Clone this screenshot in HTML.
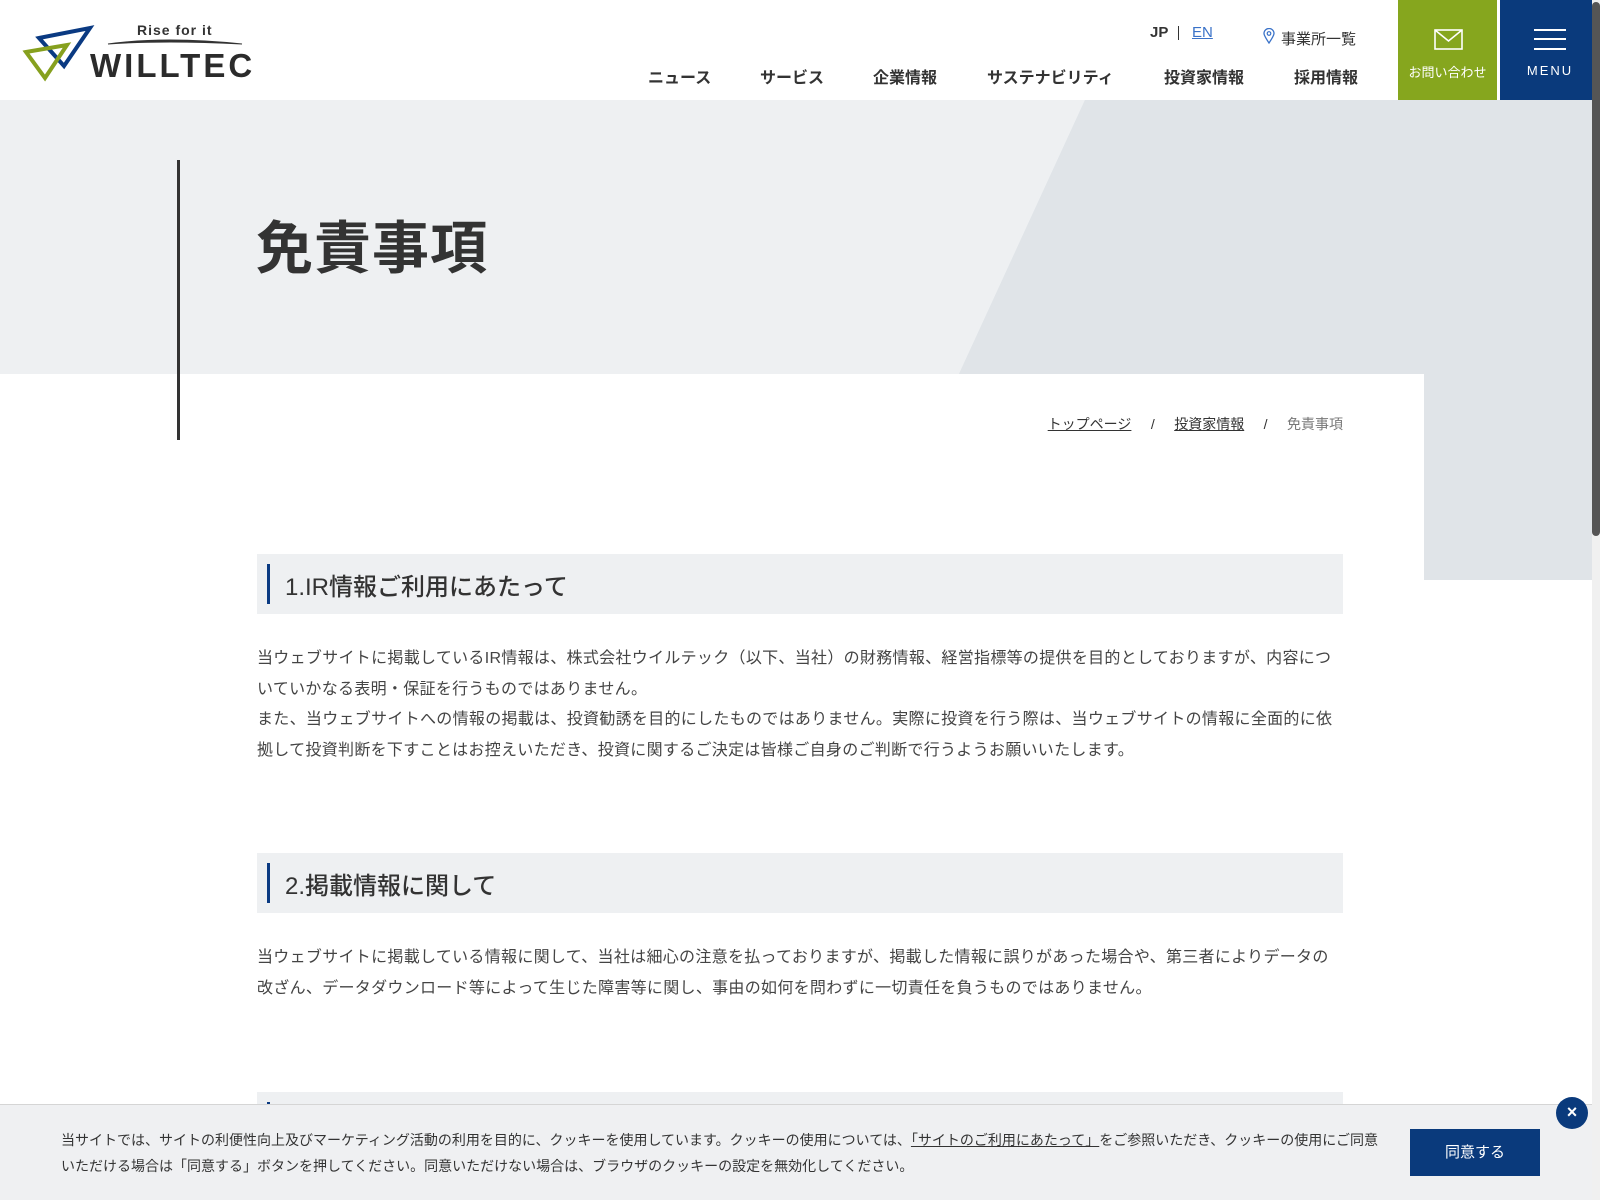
<!DOCTYPE html>
<html><head><meta charset="utf-8"><style>
*{margin:0;padding:0;box-sizing:border-box}
body{width:1600px;height:1200px;overflow:hidden;position:relative;background:#fff;font-family:"Liberation Sans","Noto Sans CJK JP",sans-serif;color:#333}
.abs{position:absolute}
.nav{position:absolute;top:64px;font-size:16px;font-weight:bold;color:#333;white-space:nowrap}
.h{position:absolute;left:257px;width:1086px;height:60px;background:#eef0f2}
.h:before{content:"";position:absolute;left:10px;top:10px;width:3px;height:40px;background:#0a3a82}
.h span{position:absolute;left:28px;top:13px;font-size:24px;font-weight:500;color:#333}
.p{position:absolute;left:257px;width:1100px;font-size:16px;line-height:30.5px;color:#444;letter-spacing:0.3px;white-space:nowrap}
</style></head><body>
<div class="abs" style="left:0;top:100px;width:1600px;height:480px;background:#eef0f2"></div>
<svg class="abs" style="left:0;top:100px" width="1600" height="480"><polygon points="1085,0 1600,0 1600,480 959,480 959,274" fill="#e0e4e8"/><polygon points="1085,0 1600,0 1600,274 959,274" fill="#e0e4e8"/></svg>
<div class="abs" style="left:0;top:374px;width:1424px;height:826px;background:#fff"></div>
<div class="abs" style="left:177px;top:160px;width:3px;height:280px;background:#333"></div>
<div class="abs" style="left:256px;top:203px;font-size:57px;font-weight:bold;color:#333;letter-spacing:1px">免責事項</div>
<div class="abs" style="right:257px;top:414px;font-size:14px;color:#333"><u>トップページ</u>&nbsp;&nbsp;&nbsp;&nbsp;&nbsp;/&nbsp;&nbsp;&nbsp;&nbsp;&nbsp;<u>投資家情報</u>&nbsp;&nbsp;&nbsp;&nbsp;&nbsp;/&nbsp;&nbsp;&nbsp;&nbsp;&nbsp;<span style="color:#777">免責事項</span></div>
<div class="abs" style="left:0;top:0;width:1600px;height:100px;background:#fff"></div>
<svg class="abs" style="left:20px;top:20px" width="250" height="65">
<polygon points="19,18 70,8 44,46" fill="none" stroke="#0a3a82" stroke-width="4" stroke-linejoin="miter"/>
<polygon points="6,32 47,25 25,58" fill="none" stroke="#86a01e" stroke-width="4"/>
<text x="117" y="15" font-size="14" font-weight="bold" fill="#333" font-family="Liberation Sans" letter-spacing="1">Rise for it</text>
<path d="M88,24 Q145,16 222,24 Q145,20 88,24Z" fill="#333" stroke="#333" stroke-width="1"/>
<text x="70" y="57" font-size="33" font-weight="bold" fill="#2b2b2b" font-family="Liberation Sans" letter-spacing="3">WILLTEC</text>
</svg>
<div class="abs" style="left:1150px;top:24px;font-size:15px;font-weight:bold;color:#333">JP</div>
<div class="abs" style="left:1178px;top:26px;width:1px;height:14px;background:#333"></div>
<div class="abs" style="left:1192px;top:24px;font-size:15px;color:#3a72c8;text-decoration:underline">EN</div>
<svg class="abs" style="left:1263px;top:28px" width="12" height="16"><path d="M6,15 C2,9 1,7 1,5.5 A5,5 0 0 1 11,5.5 C11,7 10,9 6,15Z" fill="none" stroke="#3a72c8" stroke-width="1.3"/><circle cx="6" cy="5.5" r="1.8" fill="none" stroke="#3a72c8" stroke-width="1.2"/></svg>
<div class="abs" style="left:1281px;top:28px;font-size:15px;color:#333">事業所一覧</div>
<div class="nav" style="left:648px">ニュース</div>
<div class="nav" style="left:760px">サービス</div>
<div class="nav" style="left:873px">企業情報</div>
<div class="nav" style="left:987px">サステナビリティ</div>
<div class="nav" style="left:1164px">投資家情報</div>
<div class="nav" style="left:1294px">採用情報</div>
<div class="abs" style="left:1398px;top:0;width:99px;height:100px;background:#86a61e"></div>
<svg class="abs" style="left:1434px;top:29px" width="29" height="21"><rect x="1" y="1" width="27" height="19" fill="none" stroke="#fff" stroke-width="1.6"/><path d="M1,1 L14.5,12 L28,1" fill="none" stroke="#fff" stroke-width="1.6"/></svg>
<div class="abs" style="left:1398px;top:62px;width:99px;text-align:center;font-size:13px;color:#fff">お問い合わせ</div>
<div class="abs" style="left:1500px;top:0;width:100px;height:100px;background:#0a3a7c"></div>
<div class="abs" style="left:1534px;top:29px;width:32px;height:2px;background:#fff"></div>
<div class="abs" style="left:1534px;top:38px;width:32px;height:2px;background:#fff"></div>
<div class="abs" style="left:1534px;top:48px;width:32px;height:2px;background:#fff"></div>
<div class="abs" style="left:1500px;top:63px;width:100px;text-align:center;font-size:13px;color:#fff;letter-spacing:2px">MENU</div>
<div class="abs" style="left:1592px;top:0;width:8px;height:1200px;background:#f0f0f0"></div>
<div class="abs" style="left:1592px;top:2px;width:8px;height:534px;background:#555;border-radius:4px"></div>
<div class="h" style="top:554px"><span>1.IR情報ご利用にあたって</span></div>
<div class="p" style="top:644px">当ウェブサイトに掲載しているIR情報は、株式会社ウイルテック（以下、当社）の財務情報、経営指標等の提供を目的としておりますが、内容につ<br>いていかなる表明・保証を行うものではありません。<br>また、当ウェブサイトへの情報の掲載は、投資勧誘を目的にしたものではありません。実際に投資を行う際は、当ウェブサイトの情報に全面的に依<br>拠して投資判断を下すことはお控えいただき、投資に関するご決定は皆様ご自身のご判断で行うようお願いいたします。</div>
<div class="h" style="top:853px"><span>2.掲載情報に関して</span></div>
<div class="p" style="top:943px">当ウェブサイトに掲載している情報に関して、当社は細心の注意を払っておりますが、掲載した情報に誤りがあった場合や、第三者によりデータの<br>改ざん、データダウンロード等によって生じた障害等に関し、事由の如何を問わずに一切責任を負うものではありません。</div>
<div class="h" style="top:1092px"></div>
<div class="abs" style="left:0;top:1104px;width:1592px;height:96px;background:#eff0f2;border-top:1px solid #d5d5d5"></div>
<div class="abs" style="left:61px;top:1128px;width:1340px;font-size:14px;line-height:25.5px;color:#333;white-space:nowrap">当サイトでは、サイトの利便性向上及びマーケティング活動の利用を目的に、クッキーを使用しています。クッキーの使用については、<u>「サイトのご利用にあたって」</u>をご参照いただき、クッキーの使用にご同意<br>いただける場合は「同意する」ボタンを押してください。同意いただけない場合は、ブラウザのクッキーの設定を無効化してください。</div>
<div class="abs" style="left:1410px;top:1129px;width:130px;height:47px;background:#0a3a7c;color:#fff;font-size:15px;text-align:center;line-height:47px">同意する</div>
<div class="abs" style="left:1556px;top:1097px;width:32px;height:32px;border-radius:50%;background:#0a3a7c;color:#fff;font-size:18px;font-weight:bold;text-align:center;line-height:31px">×</div>
</body></html>
